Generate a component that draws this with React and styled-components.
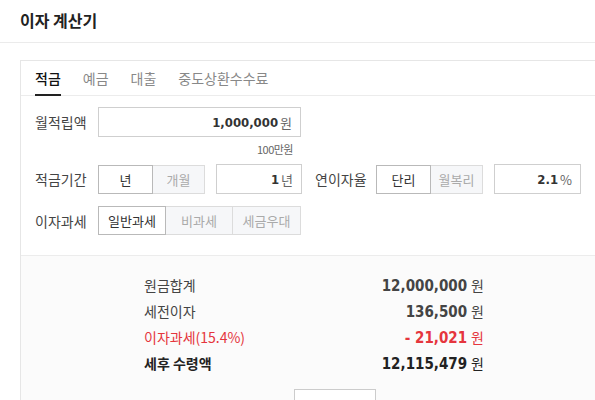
import React from 'react'
import styled, { createGlobalStyle } from 'styled-components';

const GlobalStyle = createGlobalStyle`
  html, body {
    margin: 0;
    overflow: hidden;
    background: #fff;
  }
  body {
    font-family: "Noto Sans CJK KR", "Noto Sans", sans-serif;
    color: #333;
  }
`;

const tabs = ['적금', '예금', '대출', '중도상환수수료'];

const results = [
  { label: '원금합계', value: '12,000,000' },
  { label: '세전이자', value: '136,500' },
  { label: '이자과세(15.4%)', value: '- 21,021', tone: 'red' },
  { label: '세후 수령액', value: '12,115,479', tone: 'strong' },
];

const App = () => {
  return (
    <Page>
      <GlobalStyle />
      <Header>이자 계산기</Header>
      <Card>
        <Tabs>
          {tabs.map((t, i) => (
            <Tab key={t} active={i === 0}>{t}</Tab>
          ))}
        </Tabs>
        <Form>
          <Row>
            <Label>월적립액</Label>
            <ValueBox width={203}>
              <Num>1,000,000</Num><Unit>원</Unit>
            </ValueBox>
          </Row>
          <Hint>100만원</Hint>
          <Row>
            <Label>적금기간</Label>
            <Segment>
              <SegButton width={55} active>년</SegButton>
              <SegButton width={52}>개월</SegButton>
            </Segment>
            <ValueBox width={86} spaced>
              <Num>1</Num><Unit>년</Unit>
            </ValueBox>
            <Label second>연이자율</Label>
            <Segment>
              <SegButton width={55} active>단리</SegButton>
              <SegButton width={52}>월복리</SegButton>
            </Segment>
            <ValueBox width={87} spaced>
              <Num>2.1</Num><Unit>%</Unit>
            </ValueBox>
          </Row>
          <Row>
            <Label>이자과세</Label>
            <Segment>
              <SegButton width={68} active>일반과세</SegButton>
              <SegButton width={67}>비과세</SegButton>
              <SegButton width={68}>세금우대</SegButton>
            </Segment>
          </Row>
        </Form>
        <Result>
          <ResultList>
            {results.map(r => (
              <ResultRow key={r.label} tone={r.tone}>
                <span>{r.label}</span>
                <span>
                  <ResultNum>{r.value}</ResultNum>
                  <ResultUnit>원</ResultUnit>
                </span>
              </ResultRow>
            ))}
          </ResultList>
          <ButtonBar>
            <ResetButton>초기화</ResetButton>
          </ButtonBar>
        </Result>
      </Card>
    </Page>
  )
}

const Page = styled.div`
  width: 595px;
  height: 400px;
  overflow: hidden;
`;

const Header = styled.div`
  height: 43px;
  box-sizing: border-box;
  padding: 0 20px 2px;
  display: flex;
  align-items: center;
  font-size: 16px;
  font-weight: 700;
  color: #222;
  border-bottom: 1px solid #ebebeb;
`;

const Card = styled.div`
  width: 628px;
  margin: 17px 0 0 20px;
  border: 1px solid #e6e6e6;
  background: #fff;
`;

const Tabs = styled.div`
  display: flex;
  gap: 22px;
  padding: 0 14px;
  height: 34px;
  border-bottom: 1px solid #ececec;
`;

const Tab = styled.div`
  display: flex;
  align-items: center;
  font-size: 14px;
  color: ${p => (p.active ? '#111' : '#888')};
  font-weight: ${p => (p.active ? 500 : 400)};
  box-sizing: border-box;
  border-bottom: 2px solid ${p => (p.active ? '#222' : 'transparent')};
  padding-top: 1px;
  margin-bottom: -1px;
`;

const Form = styled.div`
  padding: 11px 14px 20px;
  border-bottom: 1px solid #ececec;
`;

const Row = styled.div`
  display: flex;
  align-items: center;
  & + & {
    margin-top: 12px;
  }
`;

const Label = styled.div`
  width: ${p => (p.second ? '61px' : '63px')};
  margin-left: ${p => (p.second ? '13px' : '0')};
  font-size: 14px;
  color: #444;
`;

const ValueBox = styled.div`
  width: ${p => p.width}px;
  margin-left: ${p => (p.spaced ? '11px' : '0')};
  height: 30px;
  box-sizing: border-box;
  border: 1px solid #cfcfcf;
  display: flex;
  align-items: center;
  justify-content: flex-end;
  padding-right: 8px;
  background: #fff;
`;

const Num = styled.span`
  font-family: "DejaVu Sans Condensed", "DejaVu Sans", sans-serif;
  font-stretch: condensed;
  font-weight: 700;
  font-size: 13px;
  color: #333;
`;

const Unit = styled.span`
  font-size: 13px;
  color: #666;
  margin-left: 2px;
`;

const Hint = styled.div`
  width: 258px;
  text-align: right;
  font-size: 11px;
  color: #666;
  margin: 4px 0 7px;
  letter-spacing: -0.5px;
`;

const Segment = styled.div`
  display: flex;
`;

const SegButton = styled.div`
  width: ${p => p.width}px;
  height: 29px;
  box-sizing: border-box;
  display: flex;
  align-items: center;
  justify-content: center;
  font-size: 13px;
  color: ${p => (p.active ? '#333' : '#aaa')};
  background: ${p => (p.active ? '#fff' : '#f6f7f9')};
  border: 1px solid ${p => (p.active ? '#b9b9b9' : '#dcdcdc')};
  & + & {
    border-left: none;
  }
`;

const Result = styled.div`
  background: #fbfbfb;
  padding-top: 16px;
`;

const ResultList = styled.div`
  width: 340px;
  margin-left: 123px;
`;

const ResultRow = styled.div`
  display: flex;
  justify-content: space-between;
  align-items: center;
  height: 26px;
  font-size: 14px;
  color: ${p => (p.tone === 'red' ? '#e5353d' : p.tone === 'strong' ? '#222' : '#444')};
  font-weight: ${p => (p.tone === 'strong' ? 700 : 400)};
`;

const ResultNum = styled.span`
  font-family: "DejaVu Sans Condensed", "DejaVu Sans", sans-serif;
  font-stretch: condensed;
  font-weight: 700;
  font-size: 15px;
`;

const ResultUnit = styled.span`
  font-size: 14px;
  font-weight: 400;
  margin-left: 4px;
`;

const ButtonBar = styled.div`
  display: flex;
  justify-content: center;
  padding-top: 13px;
`;

const ResetButton = styled.div`
  width: 82px;
  height: 34px;
  box-sizing: border-box;
  border: 1px solid #ccc;
  background: #fff;
  display: flex;
  align-items: center;
  justify-content: center;
  font-size: 13px;
  color: #333;
`;

export default App
